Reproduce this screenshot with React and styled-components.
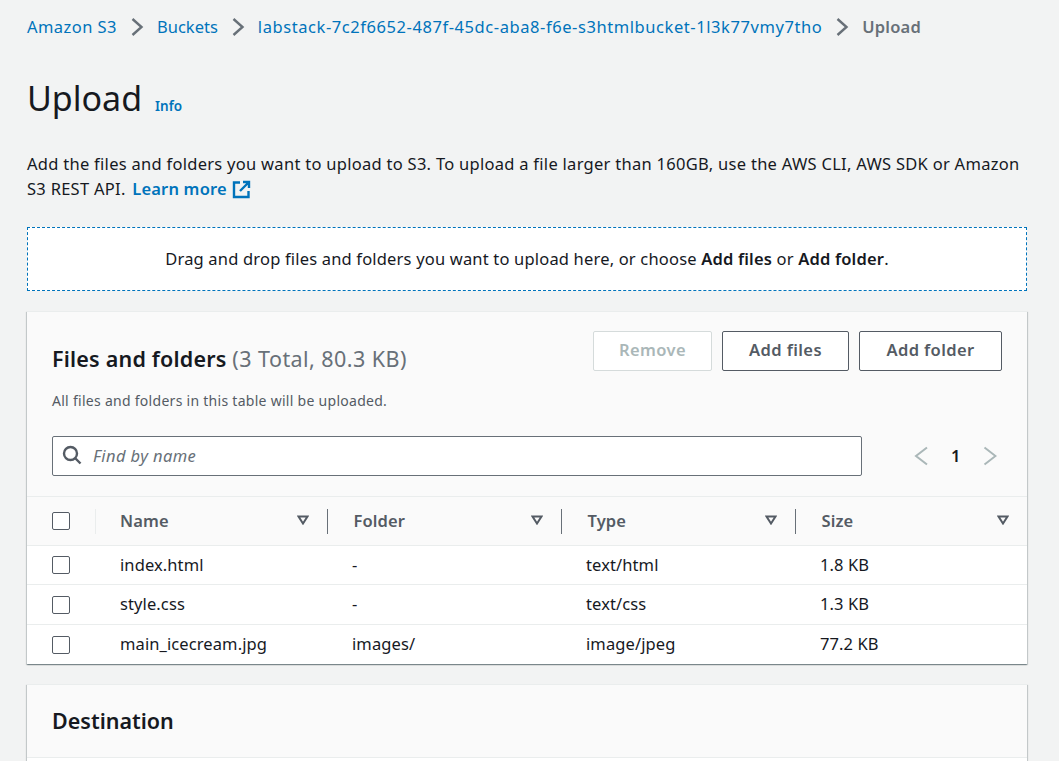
import React from 'react';
import styled, { createGlobalStyle } from 'styled-components';

const Global = createGlobalStyle`
  html, body { margin: 0; padding: 0; height: 100%; overflow: hidden; background: #f2f3f3; }
  body { font-family: "Noto Sans", "Open Sans", sans-serif; color: #16191f; }
  * { box-sizing: border-box; }
`;

const Page = styled.div`
  height: 761px;
  overflow: hidden;
  padding: 13px 32px 0 27px;
`;

const Crumbs = styled.nav`
  display: flex;
  align-items: center;
  height: 26px;
  font-size: 16.5px;
`;

const Crumb = styled.a`
  color: ${p => (p.$current ? '#687078' : '#0073bb')};
  font-weight: ${p => (p.$current ? 600 : 400)};
  letter-spacing: ${p => p.$track || 0}px;
`;

const Sep = styled.svg`
  width: 14px;
  height: 18px;
  margin: 2px 13px 0;
  fill: none;
  stroke: #687078;
  stroke-width: 2.4;
`;

const TitleRow = styled.div`
  display: flex;
  align-items: baseline;
  gap: 13px;
  margin-top: 32px;
  height: 54px;
`;

const Title = styled.h1`
  margin: 0;
  font-size: 34px;
  line-height: 54px;
  font-weight: 400;
`;

const Info = styled.a`
  color: #0073bb;
  font-size: 13.5px;
  font-weight: 600;
`;

const Intro = styled.p`
  margin: 26px 0 0;
  font-size: 16.5px;
  letter-spacing: 0.28px;
  line-height: 25px;
  color: #16191f;
`;

const Learn = styled.a`
  color: #0073bb;
  font-weight: 600;
  letter-spacing: 0.18px;
  margin-left: 2px;
`;

const ExtIcon = styled.svg`
  width: 19px;
  height: 19px;
  margin-left: 5px;
  vertical-align: -4px;
  fill: none;
  stroke: #0073bb;
  stroke-width: 2.4;
`;

const Drop = styled.div`
  margin-top: 26px;
  height: 64px;
  padding-bottom: 2px;
  border: 1px dashed #0073bb;
  background: #fff;
  display: flex;
  align-items: center;
  justify-content: center;
  font-size: 16.5px;
  letter-spacing: 0.18px;
  b { font-weight: 600; }
`;

const Card = styled.section`
  margin-top: ${p => p.$top}px;
  background: #fff;
  border-top: 1px solid #eaeded;
  box-shadow: 0 1px 1px 0 rgba(0, 28, 36, 0.3), 1px 1px 1px 0 rgba(0, 28, 36, 0.15), -1px 1px 1px 0 rgba(0, 28, 36, 0.15);
`;

const CardHead = styled.div`
  background: #fafafa;
  padding: 19px 25px 20px;
  border-bottom: 1px solid #eaeded;
`;

const HeadTop = styled.div`
  display: flex;
  justify-content: space-between;
  align-items: flex-start;
`;

const CardTitle = styled.h2`
  margin: 0;
  font-size: 21.5px;
  letter-spacing: 0.2px;
  line-height: 56px;
  height: 40px;
  font-weight: 600;
  color: #16191f;
  span { font-weight: 400; letter-spacing: 0.45px; color: #687078; }
`;

const Actions = styled.div`
  display: flex;
  gap: 10px;
`;

const Btn = styled.button`
  height: 40px;
  width: ${p => p.$w}px;
  padding: 0 0 3px;
  border-radius: 2px;
  border: 1px solid ${p => (p.$off ? '#d5dbdb' : '#545b64')};
  background: #fff;
  color: ${p => (p.$off ? '#aab7b8' : '#545b64')};
  font: 600 16.5px "Noto Sans", sans-serif;
  letter-spacing: 0.4px;
`;

const Sub = styled.div`
  margin-top: 20px;
  font-size: 14px;
  letter-spacing: 0.28px;
  line-height: 20px;
  color: #545b64;
`;

const Tools = styled.div`
  display: flex;
  align-items: center;
  margin-top: 25px;
`;

const Search = styled.div`
  width: 810px;
  height: 40px;
  display: flex;
  align-items: center;
  gap: 11px;
  padding: 0 0 2px 9px;
  background: #fff;
  border: 1px solid #687078;
  border-radius: 2px;
  font-size: 16.5px;
  letter-spacing: 0.4px;
  font-style: italic;
  color: #687078;
`;

const Pager = styled.div`
  display: flex;
  align-items: center;
  margin-left: 52px;
  font-size: 16.5px;
  font-weight: 600;
  color: #16191f;
  gap: 23px;
  span { padding-bottom: 2px; }
`;

const PageArrow = styled.svg`
  width: 14px;
  height: 20px;
  fill: none;
  stroke: #aab7b8;
  stroke-width: 2;
`;

const Grid = `
  display: grid;
  grid-template-columns: 68px 232px 234px 234px 1fr;
  align-items: center;
`;

const HeadRow = styled.div`
  ${Grid}
  height: 49px;
  background: #fafafa;
  border-bottom: 1px solid #eaeded;
`;

const Row = styled.div`
  ${Grid}
  height: ${p => p.$h}px;
  border-bottom: ${p => (p.$last ? 'none' : '1px solid #eaeded')};
  font-size: 16.5px;
  letter-spacing: 0.1px;
  color: #16191f;
`;

const CheckCell = styled.div`
  padding-left: 25px;
  display: flex;
  align-items: center;
  height: 100%;
`;

const Check = styled.span`
  display: block;
  width: 18px;
  height: 18px;
  background: #fff;
  border: 1px solid #545b64;
  border-radius: 2px;
`;

const HeadCell = styled.div`
  display: flex;
  align-items: center;
  justify-content: space-between;
  height: 25px;
  padding: 0 18px 2px ${p => (p.$light ? 24 : 25.5)}px;
  font-size: 16.5px;
  letter-spacing: 0.1px;
  font-weight: 600;
  color: #545b64;
  border-left: 1px solid ${p => (p.$light ? '#eaeded' : '#687078')};
`;

const Cell = styled.div`
  padding: 0 0 2px 25px;
`;

const Sort = styled.svg`
  width: 12px;
  height: 10px;
  fill: none;
  stroke: #545b64;
  stroke-width: 2;
`;

const DestHead = styled.div`
  background: #fafafa;
  height: 73px;
  padding: 0 25px 2px;
  display: flex;
  align-items: center;
  border-bottom: 1px solid #eaeded;
  font-size: 21.5px;
  font-weight: 600;
`;

const DestBody = styled.div`
  height: 40px;
`;

const Chevron = () => (
  <Sep viewBox="0 0 14 18"><path d="M2.500 1l9 8-9 8" /></Sep>
);

const SortIcon = () => (
  <Sort viewBox="0 0 12 10"><path d="M1.500 1.500h9L6 8.500z" /></Sort>
);

const files = [
  { name: 'index.html', folder: '-', type: 'text/html', size: '1.8 KB', h: 39 },
  { name: 'style.css', folder: '-', type: 'text/css', size: '1.3 KB', h: 40 },
  { name: 'main_icecream.jpg', folder: 'images/', type: 'image/jpeg', size: '77.2 KB', h: 39, last: true },
];

export default function App() {
  return (
    <Page>
      <Global />
      <Crumbs>
        <Crumb $track={0.45}>Amazon S3</Crumb>
        <Chevron />
        <Crumb>Buckets</Crumb>
        <Chevron />
        <Crumb $track={0.57}>labstack-7c2f6652-487f-45dc-aba8-f6e-s3htmlbucket-1l3k77vmy7tho</Crumb>
        <Chevron />
        <Crumb $current $track={0.2}>Upload</Crumb>
      </Crumbs>
      <TitleRow>
        <Title>Upload</Title>
        <Info>Info</Info>
      </TitleRow>
      <Intro>
        Add the files and folders you want to upload to S3. To upload a file larger than 160GB, use the AWS CLI, AWS SDK or Amazon S3 REST API.{' '}
        <Learn>Learn more</Learn>
        <ExtIcon viewBox="0 0 19 19">
          <path d="M8 2.500H2v14.500h14.500V11" />
          <path d="M11 2h6v6M17 2L8 11" />
        </ExtIcon>
      </Intro>
      <Drop>
        <span>Drag and drop files and folders you want to upload here, or choose <b>Add files</b> or <b>Add folder</b>.</span>
      </Drop>
      <Card $top={20}>
        <CardHead>
          <HeadTop>
            <CardTitle>Files and folders <span>(3 Total, 80.3 KB)</span></CardTitle>
            <Actions>
              <Btn $off $w={119}>Remove</Btn>
              <Btn $w={127}>Add files</Btn>
              <Btn $w={143}>Add folder</Btn>
            </Actions>
          </HeadTop>
          <Sub>All files and folders in this table will be uploaded.</Sub>
          <Tools>
            <Search>
              <svg width="20" height="20" viewBox="0 0 20 20" fill="none" stroke="#545b64" strokeWidth="2.4">
                <circle cx="8.500" cy="8.500" r="6.500" />
                <path d="M13 13l5.500 5.500" />
              </svg>
              Find by name
            </Search>
            <Pager>
              <PageArrow viewBox="0 0 14 20"><path d="M13 1.500L2 10l11 8.500" /></PageArrow>
              <span>1</span>
              <PageArrow viewBox="0 0 14 20"><path d="M1.500 1.500L12.500 10 1.500 18.500" /></PageArrow>
            </Pager>
          </Tools>
        </CardHead>
        <HeadRow>
          <CheckCell><Check /></CheckCell>
          <HeadCell $light>Name<SortIcon /></HeadCell>
          <HeadCell>Folder<SortIcon /></HeadCell>
          <HeadCell>Type<SortIcon /></HeadCell>
          <HeadCell>Size<SortIcon /></HeadCell>
        </HeadRow>
        {files.map(f => (
          <Row key={f.name} $h={f.h} $last={f.last}>
            <CheckCell><Check /></CheckCell>
            <Cell>{f.name}</Cell>
            <Cell>{f.folder}</Cell>
            <Cell>{f.type}</Cell>
            <Cell>{f.size}</Cell>
          </Row>
        ))}
      </Card>
      <Card $top={20}>
        <DestHead>Destination</DestHead>
        <DestBody />
      </Card>
    </Page>
  );
}
